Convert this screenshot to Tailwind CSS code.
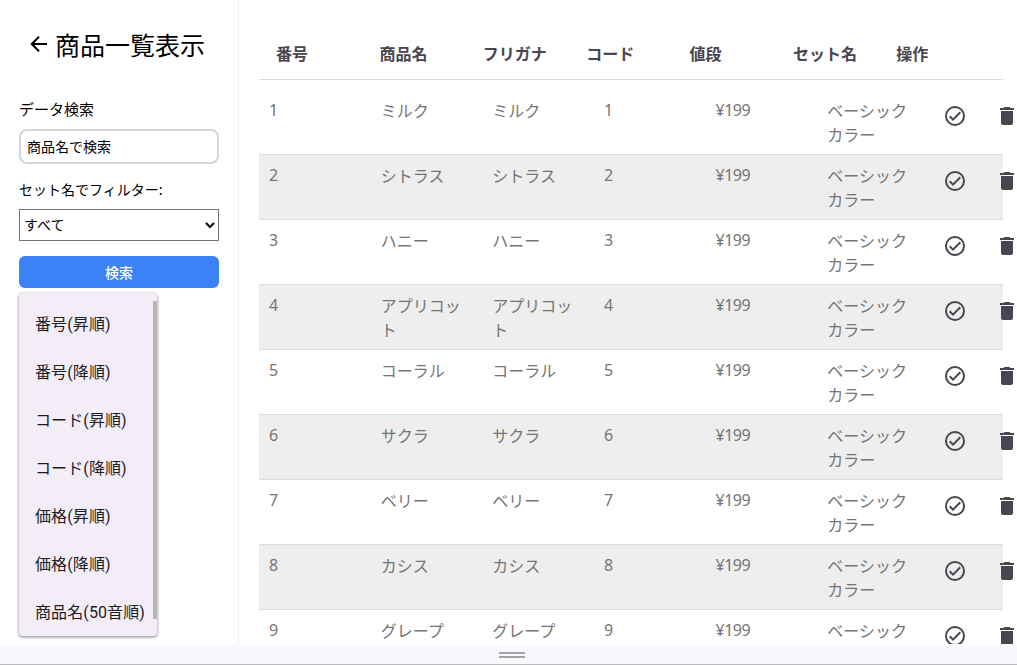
<!DOCTYPE html>
<html lang="ja">

<head>
    <meta charset="UTF-8">
    <meta name="viewport" content="width=device-width, initial-scale=1.0">
    <script src="https://cdn.jsdelivr.net/npm/@tailwindcss/browser@4"></script>
    <title>商品一覧表示</title>
</head>

<body class="h-screen flex flex-col overflow-hidden bg-white font-['Noto_Sans','Noto_Sans_CJK_JP',sans-serif] text-black">

    <div class="flex h-[644px] shrink-0 overflow-hidden">

        <!-- Sidebar -->
        <aside class="w-[239px] shrink-0 border-r border-[#f0f0f2] px-[19px] pt-6">
            <h1 class="flex h-10 items-center pl-2 text-[25px] font-['Noto_Sans_CJK_JP',sans-serif]">
                <svg class="w-6 h-6 mr-1" viewBox="0 0 24 24" fill="currentColor">
                    <path d="M20 11v2H7.2l5.5 5.5-1.42 1.42L3.36 12l7.92-7.92L12.7 5.5 7.2 11H20Z" />
                </svg>
                <span class="leading-10">商品一覧表示</span>
            </h1>

            <form id="search-form" class="text-sm font-['Noto_Sans_CJK_JP',sans-serif]" onsubmit="search(event)">
                <label for="keyword" class="block mt-[34px] h-[22px] leading-[22px] text-[15px]">データ検索</label>
                <input type="text" id="keyword" placeholder="商品名で検索"
                    class="block mt-[9px] w-full h-[35px] px-1.5 pb-0.5 border-2 border-gray-300 rounded-lg placeholder:text-black focus:outline-none">
                <label for="set" class="block mt-3.5 h-[22px] leading-[22px]">セット名でフィルター:</label>
                <select id="set" class="block mt-[9px] w-full h-8 pb-0.5 border border-[#767676] bg-white">
                    <option>すべて</option>
                    <option>ベーシックカラー</option>
                </select>
                <button type="submit" class="block mt-[15px] w-full h-8 rounded-md bg-[#3b82f6] text-white font-medium leading-8">検索</button>
            </form>

            <!-- Sort menu -->
            <div class="relative mt-[5px] w-[138px] h-[343px] overflow-hidden rounded bg-[#f3edf7] pt-2 shadow-[0_1px_3px_rgba(0,0,0,0.3),0_1px_3px_1px_rgba(0,0,0,0.15)] text-base tracking-[0.1px] text-[#1d1b20] font-['Roboto','Noto_Sans_CJK_JP',sans-serif] whitespace-nowrap">
                <ul>
                    <li class="h-12 pl-4 leading-[48px]">番号(昇順)</li>
                    <li class="h-12 pl-4 leading-[48px]">番号(降順)</li>
                    <li class="h-12 pl-4 leading-[48px]">コード(昇順)</li>
                    <li class="h-12 pl-4 leading-[48px]">コード(降順)</li>
                    <li class="h-12 pl-4 leading-[48px]">価格(昇順)</li>
                    <li class="h-12 pl-4 leading-[48px]">価格(降順)</li>
                    <li class="h-12 pl-4 leading-[48px]">商品名(50音順)</li>
                </ul>
                <div class="absolute right-0 top-2 w-1 h-[318px] bg-[#b8b5b9]"></div>
            </div>
        </aside>

        <!-- Product list -->
        <main class="ml-5 mt-[29px] w-[744px] shrink-0">
            <div class="flex h-[51px] border-b border-[#dcdcdc] pl-[17px] text-base font-bold leading-[50px] text-[#49454f]">
                <div class="w-[103.4px]">番号</div>
                <div class="w-[103.4px]">商品名</div>
                <div class="w-[103.4px]">フリガナ</div>
                <div class="w-[103.4px]">コード</div>
                <div class="w-[103.4px]">値段</div>
                <div class="w-[103.4px]">セット名</div>
                <div>操作</div>
            </div>
            <div id="items" class="mt-2.5 text-base leading-6 text-[#757575]"></div>
        </main>
    </div>

    <!-- Resize handle -->
    <div class="flex h-[21px] shrink-0 flex-col items-center gap-0.5 border-b border-[#b9b9b9] bg-[#f8f9fe] pt-2 pl-1.5">
        <div class="w-[26px] h-0.5 bg-[#a3a3a5]"></div>
        <div class="w-[26px] h-0.5 bg-[#a3a3a5]"></div>
    </div>

    <script>
        const names = ['ミルク', 'シトラス', 'ハニー', 'アプリコット', 'コーラル', 'サクラ', 'ベリー', 'カシス', 'グレープ'];
        const items = document.getElementById('items');

        items.innerHTML = names.map((name, i) => `
            <div class="flex h-[65px] border-b border-[#dcdcdc] pt-2 even:bg-[#eeeeee]">
                <div class="w-[111.65px] shrink-0 px-2.5">${i + 1}</div>
                <div class="w-[111.65px] shrink-0 px-2.5 pt-px">${name}</div>
                <div class="w-[111.65px] shrink-0 px-2.5 pt-px">${name}</div>
                <div class="w-[111.65px] shrink-0 px-2.5">${i + 1}</div>
                <div class="w-[111.65px] shrink-0 px-2.5 tracking-[-0.5px]">¥199</div>
                <div class="w-[111.65px] shrink-0 px-2.5 pt-px">ベーシックカラー</div>
                <div class="flex shrink-0 gap-7 pl-[14px] pt-1.5 text-[#49454f]">
                    <svg class="w-6 h-6 shrink-0" viewBox="0 0 24 24" fill="currentColor">
                        <path d="M12 2a10 10 0 1 0 0 20 10 10 0 0 0 0-20m0 18a8 8 0 1 1 0-16 8 8 0 0 1 0 16m4.59-12.42L10 14.17l-2.59-2.58L6 13l4 4 8-8-1.41-1.42Z" />
                    </svg>
                    <svg class="w-6 h-6 shrink-0" viewBox="0 0 24 24" fill="currentColor">
                        <path d="M19 4h-3.5l-1-1h-5l-1 1H5v2h14V4M6 19a2 2 0 0 0 2 2h8a2 2 0 0 0 2-2V7H6v12Z" />
                    </svg>
                </div>
            </div>`).join('');

        const search = (event) => {
            event.preventDefault();
            const word = document.getElementById('keyword').value;
            [...items.children].forEach((row, i) => {
                row.classList.toggle('hidden', !names[i].includes(word));
            });
        }
    </script>
</body>

</html>
